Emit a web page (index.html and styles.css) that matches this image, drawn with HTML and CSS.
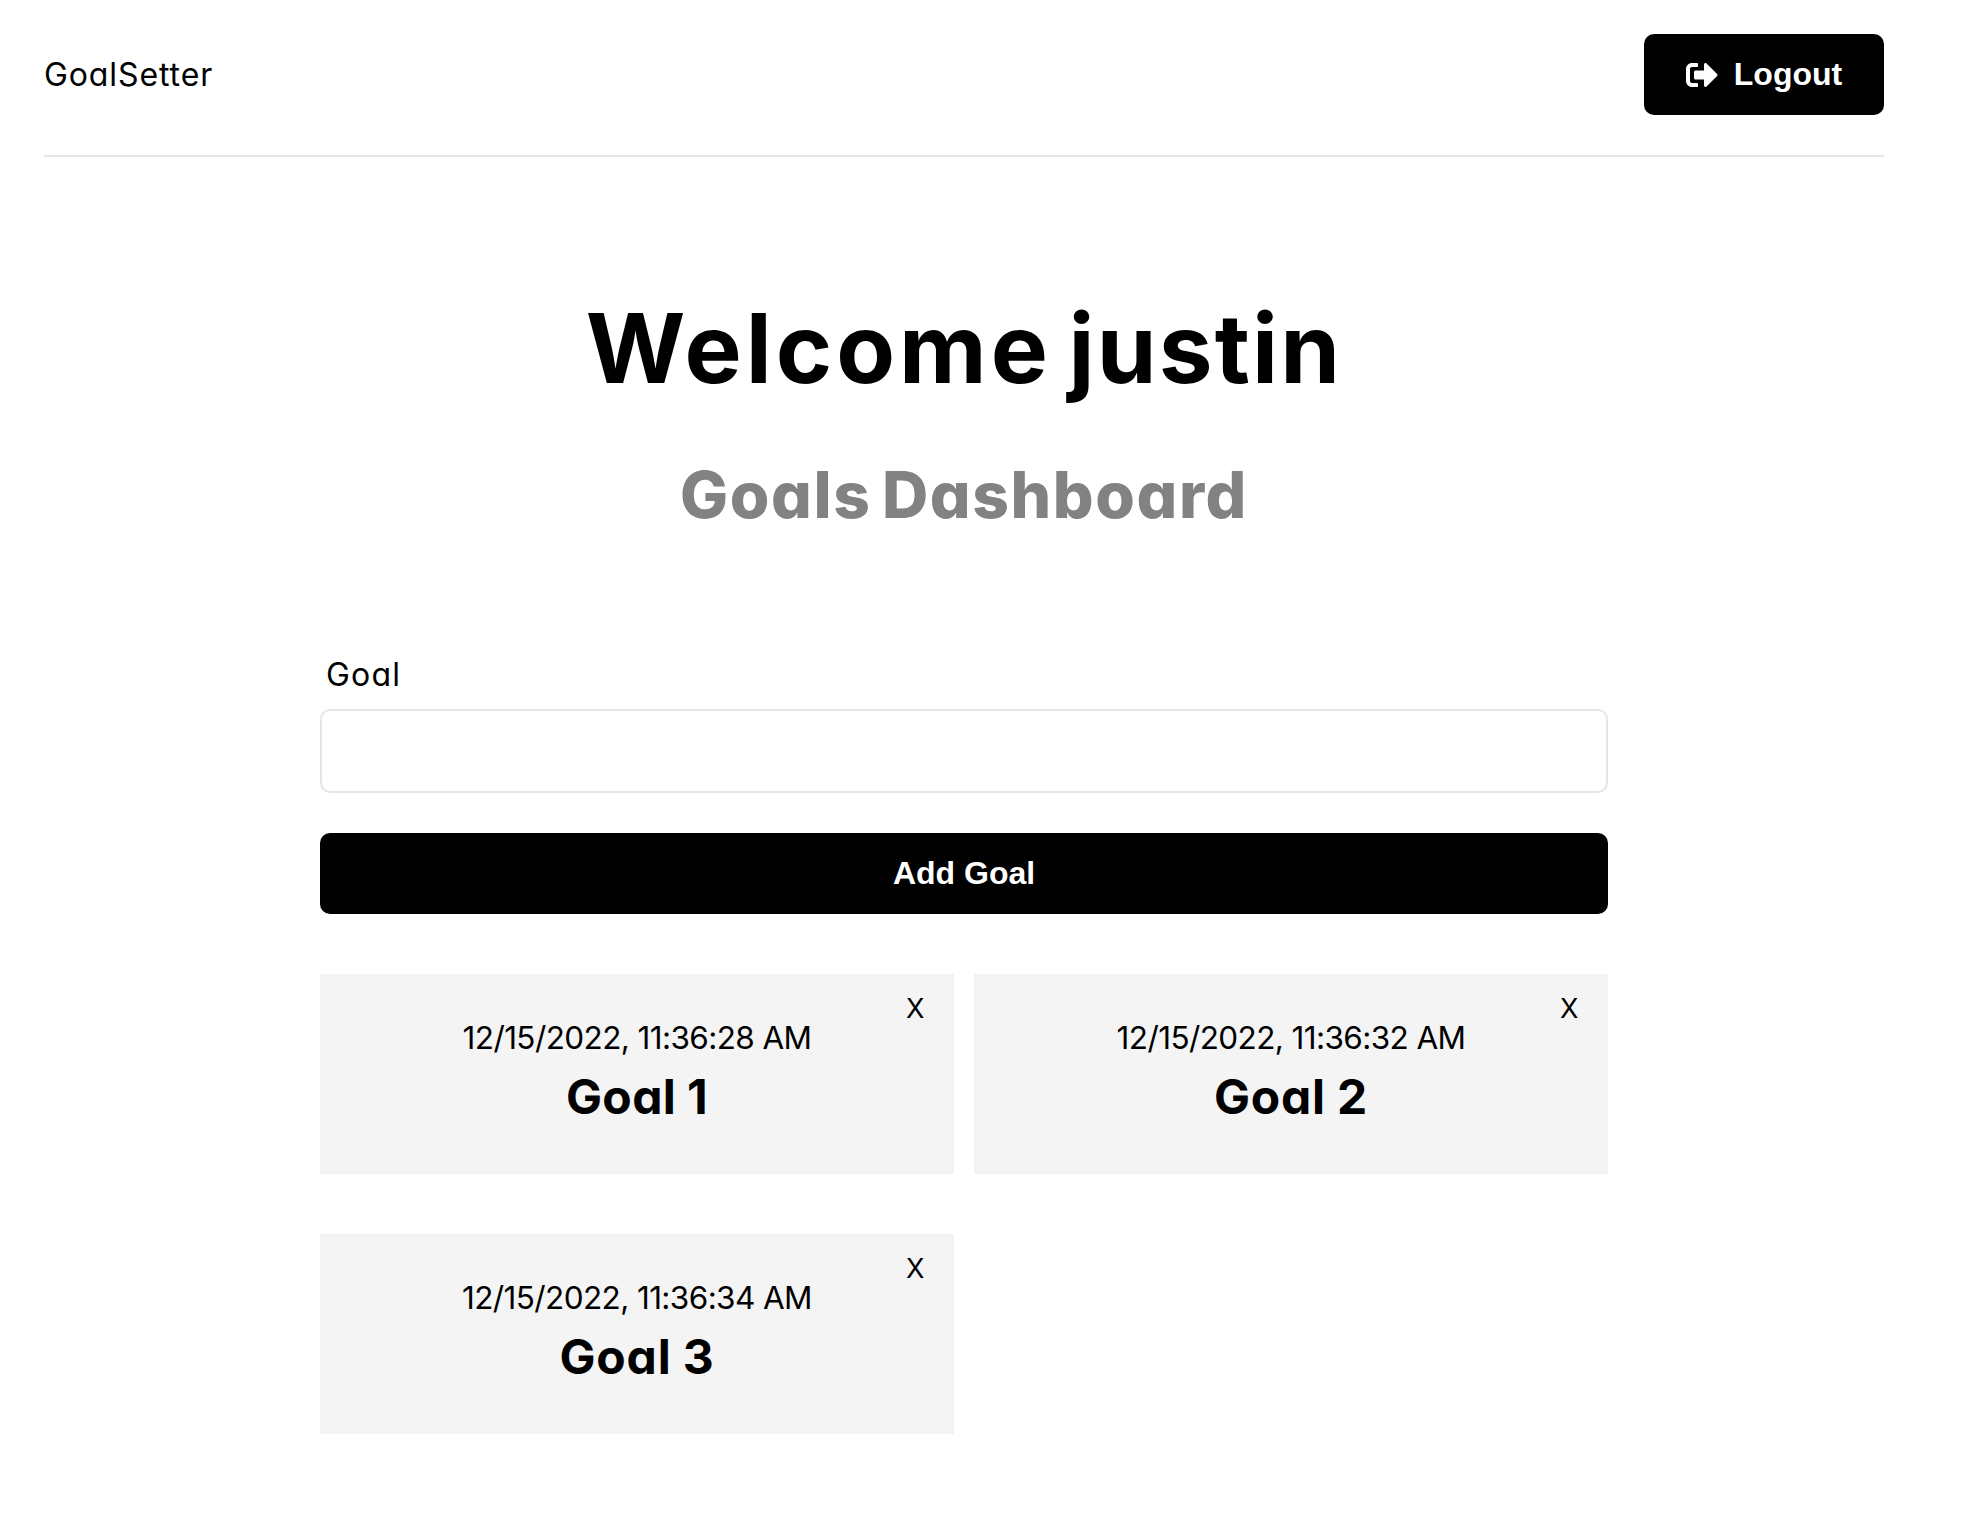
FILE: index.html
```html
<!DOCTYPE html>
<html lang="en">
<head>
<meta charset="utf-8">
<title>GoalSetter</title>
<link rel="stylesheet" href="styles.css">
</head>
<body>
<div class="container">
  <header class="header">
    <a class="logo">GoalSetter</a>
    <button class="btn btn-logout" type="button">
      <svg class="icon" viewBox="0 0 512 512" fill="currentColor" aria-hidden="true"><path d="M497 273L329 441c-15 15-41 4.5-41-17v-96H152c-13.3 0-24-10.7-24-24v-96c0-13.3 10.7-24 24-24h136V88c0-21.4 25.9-32 41-17l168 168c9.3 9.4 9.3 24.6 0 34zM192 436v-40c0-6.6-5.4-12-12-12H96c-17.7 0-32-14.3-32-32V160c0-17.7 14.3-32 32-32h84c6.6 0 12-5.4 12-12V76c0-6.6-5.4-12-12-12H96c-53 0-96 43-96 96v192c0 53 43 96 96 96h84c6.6 0 12-5.4 12-12z"/></svg>
      Logout
    </button>
  </header>
  <section class="heading">
    <h1><span class="greeting">Welcome</span> <span class="name">justin</span></h1>
    <p>Goals Dashboard</p>
  </section>
  <main class="content">
    <form class="form">
      <label for="text">Goal</label>
      <input type="text" id="text" name="text">
      <button class="btn btn-block" type="button">Add Goal</button>
    </form>
    <div class="goals">
      <article class="goal">
        <div class="date">12/15/2022, 11:36:28 AM</div>
        <h2 class="one">Goal 1</h2>
        <button class="close" type="button">X</button>
      </article>
      <article class="goal">
        <div class="date">12/15/2022, 11:36:32 AM</div>
        <h2>Goal 2</h2>
        <button class="close" type="button">X</button>
      </article>
      <article class="goal">
        <div class="date">12/15/2022, 11:36:34 AM</div>
        <h2>Goal 3</h2>
        <button class="close" type="button">X</button>
      </article>
    </div>
  </main>
</div>
</body>
</html>
```
FILE: styles.css
```css
* {
  box-sizing: border-box;
  margin: 0;
  padding: 0;
}

body {
  background: #fff;
  color: #000;
  font-family: Inter, "Noto Sans", sans-serif;
  font-feature-settings: "cv11";
  font-size: 32px;
}

.container {
  width: 1840px;
  margin-left: 44px;
}

.header {
  display: flex;
  justify-content: space-between;
  align-items: center;
  padding: 34px 0 40px;
  border-bottom: 2px solid #e6e6e6;
}

.logo {
  letter-spacing: 0.9px;
}

.btn {
  display: flex;
  align-items: center;
  justify-content: center;
  height: 81px;
  border: 0;
  border-radius: 10px;
  background: #000;
  color: #fff;
  font: 700 32px "Liberation Sans", Arial, sans-serif;
}

.btn-logout {
  width: 240px;
  gap: 16px;
}

.icon {
  width: 32px;
  height: 32px;
}

.heading {
  padding-top: 143px;
  text-align: center;
}

.heading h1 {
  font-size: 96px;
  font-weight: 650;
  line-height: 96px;
  word-spacing: -6px;
}

.greeting {
  letter-spacing: 4px;
}

.name {
  letter-spacing: 2.2px;
}

.heading p {
  margin-top: 67px;
  color: #828282;
  font-size: 64px;
  font-weight: 800;
  line-height: 64px;
  letter-spacing: 1.6px;
  word-spacing: -5px;
}

.content {
  width: 1288px;
  margin: 124px auto 0;
}

.form {
  display: flex;
  flex-direction: column;
}

.form label {
  margin: 0 0 10px 6px;
  line-height: 48px;
  letter-spacing: 1.2px;
}

.form input {
  height: 84px;
  margin-bottom: 40px;
  padding: 20px;
  border: 2px solid #e6e6e6;
  border-radius: 10px;
  background: #fff;
  font: inherit;
}

.goals {
  display: grid;
  grid-template-columns: 1fr 1fr;
  gap: 60px 20px;
  margin-top: 60px;
}

.goal {
  position: relative;
  height: 200px;
  padding-top: 40px;
  background: #f4f4f4;
  text-align: center;
}

.date {
  font-size: 31.5px;
  line-height: 48px;
  letter-spacing: -0.6px;
}

.goal h2 {
  margin-top: 5px;
  font-size: 48px;
  font-weight: 650;
  line-height: 60px;
  letter-spacing: 0.8px;
  word-spacing: -1px;
}

.goal .one {
  letter-spacing: 0.4px;
}

.close {
  position: absolute;
  top: 19px;
  right: 29.5px;
  border: 0;
  background: none;
  color: #000;
  font: 400 27px/32px Inter, sans-serif;
}
```
